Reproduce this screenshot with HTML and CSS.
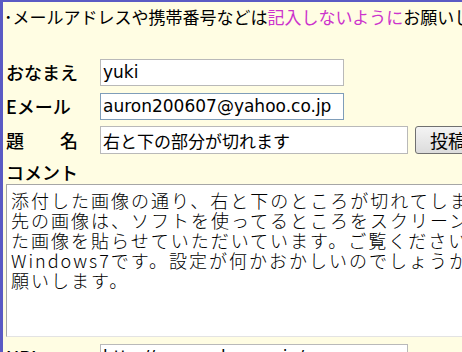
FILE: index.html
```html
<!DOCTYPE html>
<html>
<head>
    <title>投稿フォーム</title>
    <meta charset="utf-8">
    <link rel="stylesheet" href="styles.css">
</head>
<body>
    <div class="page">
        <p class="notice">･メールアドレスや携帯番号などは<span class="warn">記入しないように</span>お願いします。</p>
        <form class="post-form">
            <div class="row">
                <label class="label">おなまえ</label>
                <input type="text" class="field name" value="yuki">
            </div>
            <div class="row">
                <label class="label">Eメール</label>
                <input type="text" class="field mail" value="auron200607@yahoo.co.jp">
            </div>
            <div class="row">
                <label class="label">題　　名</label>
                <input type="text" class="field subject" value="右と下の部分が切れます">
                <button type="button" class="submit">投稿する</button>
            </div>
            <div class="comment-label">コメント</div>
            <textarea class="comment">添付した画像の通り、右と下のところが切れてしまいます。
先の画像は、ソフトを使ってるところをスクリーンショットし
た画像を貼らせていただいています。ご覧ください。
Windows7です。設定が何かおかしいのでしょうか。よろしくお
願いします。</textarea>
            <div class="row url-row">
                <label class="label">URL</label>
                <input type="text" class="field url" value="http://www.yahoo.co.jp/">
            </div>
        </form>
    </div>
</body>
</html>
```

FILE: styles.css
```css
body {
    margin: 0;
    background-color: #fffde3;
    font-family: "Noto Sans CJK JP", sans-serif;
    color: #000;
    overflow: hidden;
}

.page {
    border-top: 2px solid #5a5ac4;
    border-left: 3px solid #5a5ac4;
    height: 400px;
    white-space: nowrap;
}

.notice {
    margin: 0;
    padding: 3px 0 0 1px;
    font-size: 17px;
    line-height: 24px;
    height: 56px;
    box-sizing: border-box;
}

.warn {
    color: #cc33cc;
}

.post-form {
    padding-left: 3px;
}

.row {
    display: flex;
    align-items: center;
    height: 28px;
    margin-bottom: 6px;
}

.label {
    flex-shrink: 0;
    width: 94px;
    font-size: 18px;
    font-weight: 500;
    line-height: 24px;
}

.field {
    flex-shrink: 0;
    height: 27px;
    box-sizing: border-box;
    border: 1px solid #b9b9b9;
    background: #fff;
    padding: 0 2px;
    font-family: "DejaVu Sans", sans-serif;
    font-size: 17px;
    color: #000;
}

.name {
    width: 244px;
}

.mail {
    width: 244px;
    border-color: #7f9db9;
}

.subject {
    width: 308px;
    height: 28px;
    font-family: "Noto Sans CJK JP", sans-serif;
    font-size: 17px;
}

.url {
    width: 308px;
}

.submit {
    flex-shrink: 0;
    margin-left: 7px;
    height: 28px;
    padding: 0 14px;
    border: 1px solid #707070;
    border-radius: 3px;
    background: linear-gradient(#f4f4f4, #dcdcdc);
    font-family: "Noto Sans CJK JP", sans-serif;
    font-size: 18px;
    color: #000;
}

.comment-label {
    margin-top: 3px;
    font-size: 18px;
    font-weight: 500;
    line-height: 24px;
}

.comment {
    display: block;
    width: 480px;
    height: 153px;
    box-sizing: border-box;
    margin: 0;
    padding: 5px 4px;
    border: 1px solid #a6a6a6;
    border-right: none;
    border-bottom-color: #e3e3e3;
    resize: none;
    font-family: "Noto Sans CJK JP", sans-serif;
    font-size: 18px;
    font-weight: 300;
    letter-spacing: 2px;
    line-height: 20px;
    color: #000;
    overflow: hidden;
    white-space: pre;
}

.url-row {
    margin-top: 6px;
}
```
